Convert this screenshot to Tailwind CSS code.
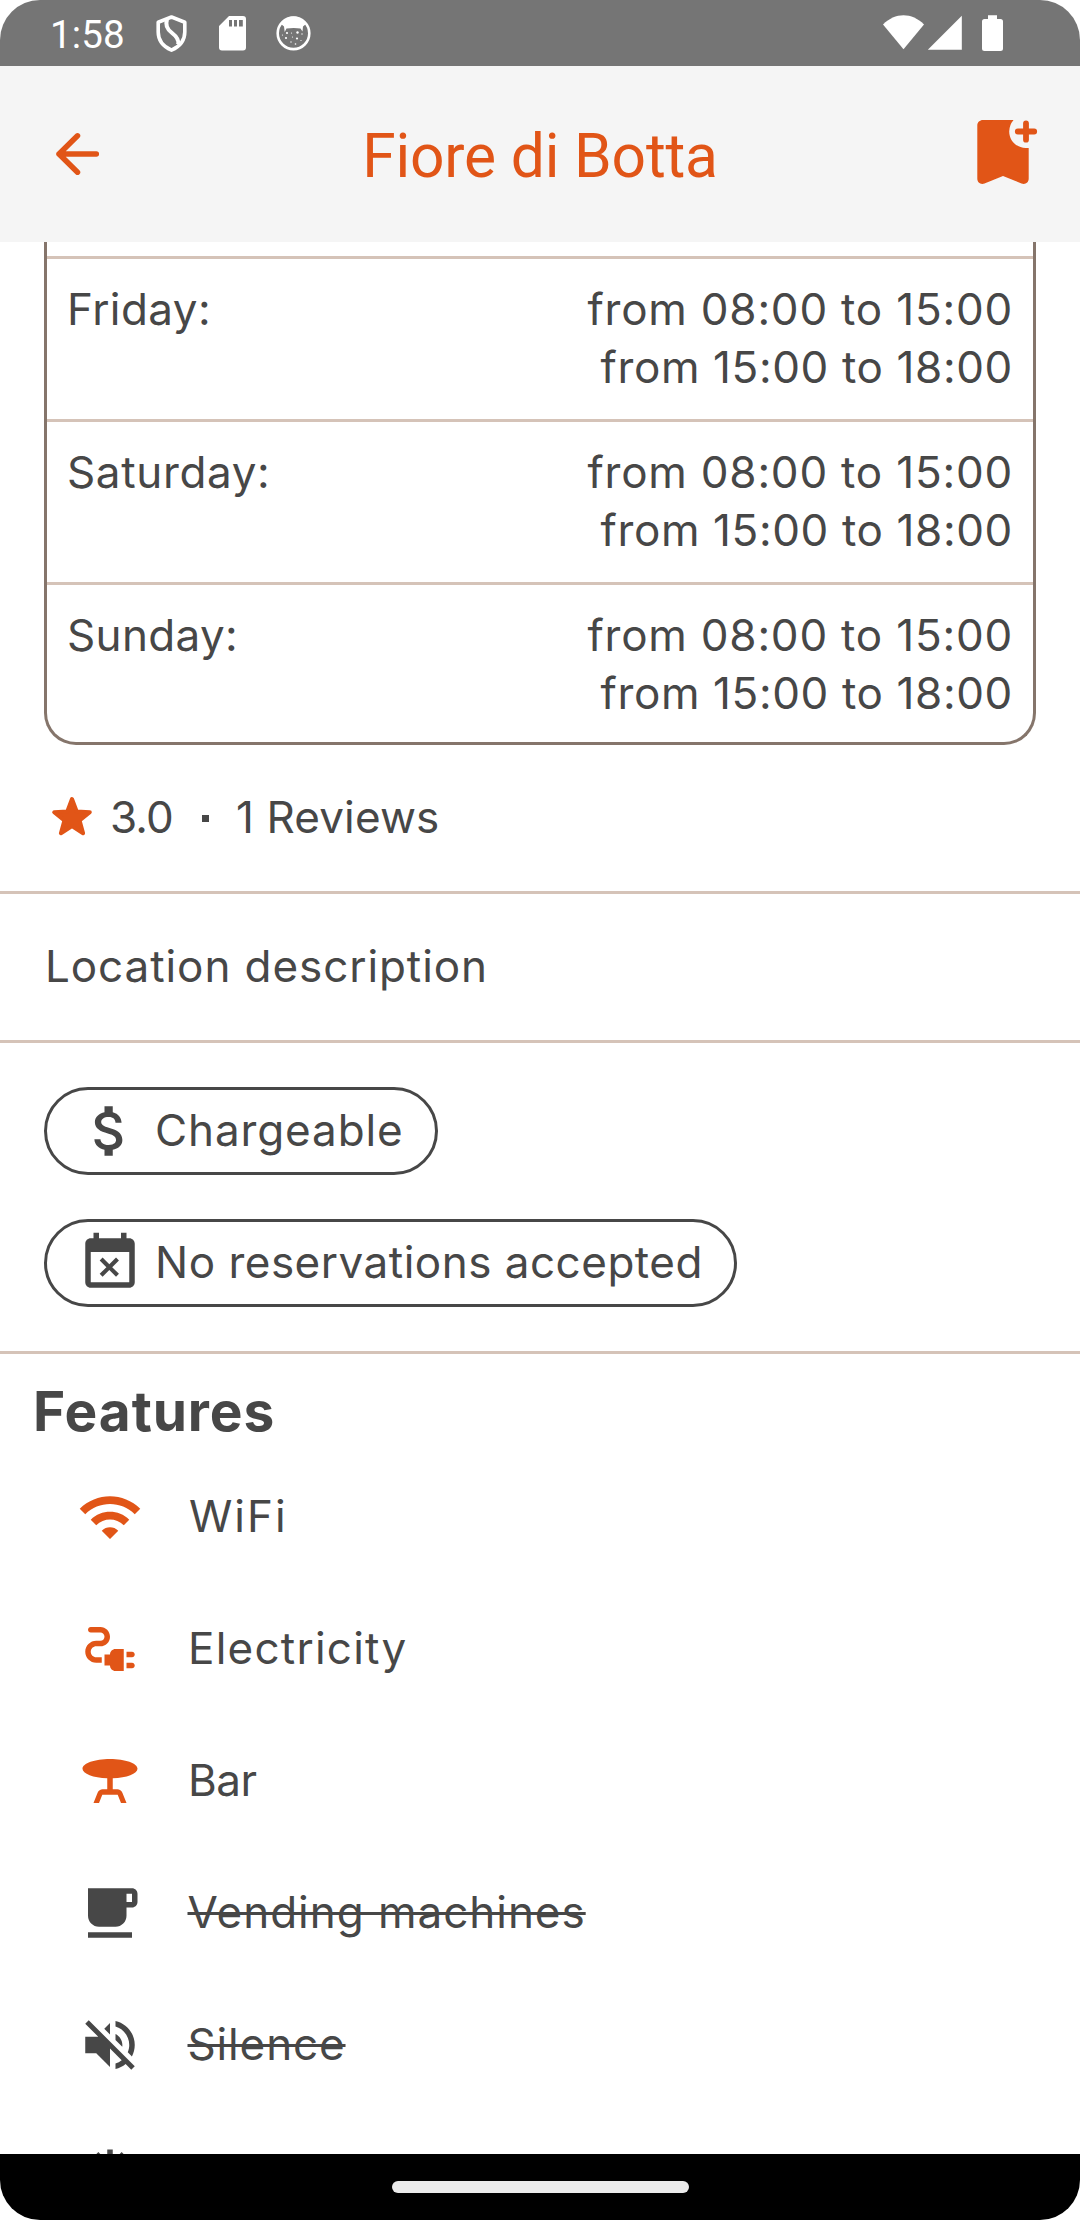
<!DOCTYPE html>
<html lang="en">
<head>
<meta charset="utf-8">
<title>Fiore di Botta</title>
<script src="https://cdn.jsdelivr.net/npm/@tailwindcss/browser@4"></script>
</head>
<body class="bg-white">
<div class="flex h-[2220px] w-[1080px] flex-col overflow-hidden rounded-[40px] bg-white font-[Inter,sans-serif] text-[44px] leading-[58px] text-[#474747]">

  <!-- Status bar -->
  <div class="flex h-[66px] shrink-0 items-center bg-[#757575] pl-[50px] font-[Roboto,sans-serif] text-[38.5px] leading-[66px] tracking-[0.13px] text-white">
    <span class="w-[102px] pt-[4px]">1:58</span>
    <svg class="h-[66px] w-[40px]" viewBox="152 0 40 66" fill="none" stroke="#fff" stroke-width="3.6" stroke-linejoin="round">
      <path d="M171.500 17l13.300 5.200V32c0 8.500-5.600 14.800-13.300 18.200C163.800 46.800 158.200 40.500 158.200 32V22.200z"/>
      <path d="M167 19.500c-2 6 0 9.500 4.500 13s8 7.500 6.500 12" stroke-width="4"/>
    </svg>
    <svg class="ml-[27px] h-[66px] w-[27px]" viewBox="219 0 27 66" fill="#fff" fill-rule="evenodd">
      <path d="M229 16h14a3 3 0 0 1 3 3v28.500a3 3 0 0 1-3 3h-21a3 3 0 0 1-3-3V26zM229 20v6.500h3V20zM234 20v6.500h3V20zM239 20v6.500h3.800V20z"/>
    </svg>
    <svg class="ml-[29px] h-[66px] w-[37px]" viewBox="275 0 37 66">
      <circle cx="293.500" cy="33.300" r="15.800" fill="none" stroke="#fff" stroke-width="2.600"/>
      <path fill="#fff" d="M281 24c3-5 7-7.500 12.500-7.500S303 19 306 24l-3 2.500-.5 5-2-3c-4-.8-9.500-.8-14 0l-1.800 3.500-.7-5.500z"/>
      <g fill="#fff"><circle cx="287" cy="33" r="1.100"/><circle cx="297.500" cy="32.500" r="1.200"/><circle cx="286" cy="38" r="1.100"/><circle cx="292.500" cy="37" r=".6"/><circle cx="297" cy="38.500" r="1.100"/><circle cx="302" cy="34" r=".7"/><circle cx="291" cy="42" r=".7"/><circle cx="295.500" cy="44" r=".8"/><circle cx="301" cy="40.500" r=".6"/><circle cx="282.500" cy="35" r=".6"/><circle cx="291.500" cy="33" r=".6"/></g>
    </svg>
    <svg class="mr-[76px] ml-auto h-[66px] w-[124px]" viewBox="880 0 124 66" fill="#fff">
      <path d="M903.500 49.300L883 24.500c12-12.400 29-12.400 41 0z"/>
      <path d="M961.800 15.800v34h-34z"/>
      <path d="M988 15.300h9V19h3.500a2.500 2.500 0 0 1 2.500 2.500v27a2.500 2.500 0 0 1-2.500 2.500h-16a2.500 2.500 0 0 1-2.500-2.500v-27a2.500 2.500 0 0 1 2.500-2.500h3.500z"/>
    </svg>
  </div>

  <!-- App bar -->
  <header class="flex h-[176px] shrink-0 items-center justify-between bg-[#f5f5f5] pr-[40px] pl-[52px] text-[#e15517]">
    <svg class="h-[52px] w-[52px]" viewBox="52 128 52 52" fill="none" stroke="currentColor" stroke-width="5.500" stroke-linecap="round" stroke-linejoin="round">
      <path d="M96.300 154H59M77.500 135.800L59 154l18.500 18.200"/>
    </svg>
    <h1 class="pt-[5px] font-[Roboto,sans-serif] text-[60.5px] leading-[72px] tracking-[-0.18px]">Fiore di Botta</h1>
    <svg class="h-[68px] w-[64px]" viewBox="976 120 64 68" fill="currentColor">
      <path d="M983 120h30.500a18.500 18.500 0 0 0-4.300 11.500c0 9.300 7.500 16.500 16.500 16.500h3v30.500c0 4-3.500 6.500-7.200 5L1003 176l-18.500 7.500c-3.700 1.500-7.200-1-7.200-5v-53c0-3.200 2.500-5.500 5.700-5.500z"/>
      <path d="M1026 123.300v16.400M1017.800 131.500h16.400" fill="none" stroke="currentColor" stroke-width="5.800" stroke-linecap="round"/>
    </svg>
  </header>

  <main class="flex min-h-0 grow flex-col overflow-hidden">
    <!-- Opening hours -->
    <section class="mx-[44px] h-[503px] shrink-0 rounded-b-[32px] border-x-3 border-b-3 border-[#85756b] pt-[14px]">
      <div class="flex h-[163px] justify-between border-t-3 border-[#d5c3b8] pt-[21px] pr-[20px] pl-[20px]">
        <span class="tracking-[0.45px]">Friday:</span>
        <div class="flex flex-col items-end"><span class="tracking-[0.79px]">from 08:00 to 15:00</span><span class="tracking-[0.62px]">from 15:00 to 18:00</span></div>
      </div>
      <div class="flex h-[163px] justify-between border-t-3 border-[#d5c3b8] pt-[21px] pr-[20px] pl-[20px]">
        <span class="tracking-[0.64px]">Saturday:</span>
        <div class="flex flex-col items-end"><span class="tracking-[0.79px]">from 08:00 to 15:00</span><span class="tracking-[0.62px]">from 15:00 to 18:00</span></div>
      </div>
      <div class="flex h-[160px] justify-between border-t-3 border-[#d5c3b8] pt-[21px] pr-[20px] pl-[20px]">
        <span class="tracking-[0.34px]">Sunday:</span>
        <div class="flex flex-col items-end"><span class="tracking-[0.79px]">from 08:00 to 15:00</span><span class="tracking-[0.62px]">from 15:00 to 18:00</span></div>
      </div>
    </section>

    <!-- Rating -->
    <section class="flex h-[149px] shrink-0 items-center border-b-3 border-[#d5c3b8] pl-[50px]">
      <svg class="h-[44px] w-[44px]" viewBox="-22 -22 44 44" fill="#e15517" stroke="#e15517" stroke-width="4" stroke-linejoin="round">
        <path d="M0-19L4.700-6.500 17.800-5.800 7.600 2.500 11.100 15.200 0 8-11.100 15.200-7.600 2.500-17.800-5.800-4.700-6.500z"/>
      </svg>
      <span class="ml-[16px] w-[92px] pb-[2px] tracking-[-0.87px]">3.0</span>
      <span class="size-[7px] bg-[#474747]"></span>
      <span class="ml-[27px] pb-[2px] tracking-[0.13px]">1 Reviews</span>
    </section>

    <!-- Description -->
    <section class="flex h-[149px] shrink-0 items-center border-b-3 border-[#d5c3b8] pb-[2px] pl-[45px]">
      <p class="tracking-[0.92px]">Location description</p>
    </section>

    <!-- Payment and reservations -->
    <section class="flex h-[311px] shrink-0 flex-col items-start gap-[44px] border-b-3 border-[#d5c3b8] pt-[44px] pl-[44px]">
      <div class="flex h-[88px] w-[394px] items-center rounded-full border-3 border-[#474747] pl-[30px]">
        <svg class="size-[66px]" viewBox="0 0 24 24" fill="currentColor"><path d="M11.800 10.900c-2.270-.59-3-1.200-3-2.150 0-1.090 1.010-1.850 2.700-1.850 1.780 0 2.440.85 2.500 2.100h2.210c-.07-1.720-1.120-3.300-3.210-3.810V3h-3v2.160c-1.940.42-3.500 1.680-3.500 3.610 0 2.310 1.910 3.460 4.700 4.130 2.500.6 3 1.480 3 2.410 0 .69-.49 1.790-2.700 1.790-2.060 0-2.870-.92-2.980-2.100h-2.200c.12 2.190 1.760 3.420 3.680 3.830V21h3v-2.150c1.950-.37 3.500-1.500 3.500-3.550 0-2.840-2.430-3.810-4.700-4.400z"/></svg>
        <span class="ml-[12px] pb-[2px] tracking-[0.88px]">Chargeable</span>
      </div>
      <div class="flex h-[88px] w-[693px] items-center rounded-full border-3 border-[#474747] pl-[30px]">
        <svg class="size-[66px]" viewBox="0 0 24 24" fill="currentColor"><path d="M9.310 17l2.440-2.440L14.190 17l1.060-1.060-2.440-2.440 2.440-2.440L14.190 10l-2.440 2.440L9.310 10l-1.060 1.060 2.440 2.440-2.440 2.440L9.310 17zM19 3h-1V1h-2v2H8V1H6v2H5c-1.110 0-1.990.9-1.990 2L3 19c0 1.100.89 2 2 2h14c1.100 0 2-.9 2-2V5c0-1.100-.9-2-2-2zm0 16H5V8h14v11z"/></svg>
        <span class="ml-[12px] pb-[2px] tracking-[0.5px]">No reservations accepted</span>
      </div>
    </section>

    <!-- Features -->
    <section class="shrink-0 pt-[24px]">
      <h2 class="pl-[33px] text-[55px] leading-[66px] font-bold tracking-[0.91px]">Features</h2>
      <ul class="mt-[7px]">
        <li class="flex h-[132px] items-center pl-[77px]">
          <svg class="size-[66px]" viewBox="0 0 24 24" fill="#e15517"><path d="M1 9l2 2c4.970-4.970 13.030-4.970 18 0l2-2C16.930 2.930 7.080 2.930 1 9zm8 8l3 3 3-3c-1.650-1.660-4.340-1.660-6 0zm-4-4l2 2c2.760-2.760 7.240-2.760 10 0l2-2C15.140 9.140 8.870 9.140 5 13z"/></svg>
          <span class="ml-[46px] pb-[2px] tracking-[2px]">WiFi</span>
        </li>
        <li class="flex h-[132px] items-center pl-[77px]">
          <svg class="size-[66px]" viewBox="0 0 24 24" fill="#e15517"><path d="M21 14c0-.55-.45-1-1-1h-2v2h2c.55 0 1-.45 1-1zM20 17h-2v2h2c.55 0 1-.45 1-1s-.45-1-1-1zM12 14h-2v4h2c0 1.100.9 2 2 2h3v-8h-3c-1.100 0-2 .9-2 2zM5 13c0-1.100.9-2 2-2h1.500c1.930 0 3.500-1.570 3.500-3.500S10.430 4 8.500 4H5c-.55 0-1 .45-1 1s.45 1 1 1h3.500c.83 0 1.500.67 1.500 1.500S9.330 9 8.500 9H7c-2.210 0-4 1.790-4 4s1.790 4 4 4h2v-2H7c-1.100 0-2-.9-2-2z"/></svg>
          <span class="ml-[45px] pb-[2px] tracking-[1.23px]">Electricity</span>
        </li>
        <li class="flex h-[132px] items-center pl-[77px]">
          <svg class="size-[66px]" viewBox="0 0 24 24" fill="#e15517"><path d="M22 7.500C22 5.570 17.520 4 12 4S2 5.570 2 7.500c0 1.810 3.950 3.310 9 3.480V15H9.350c-.82 0-1.550.5-1.860 1.260L6 20h2l1.200-3h5.600l1.200 3h2l-1.500-3.740c-.3-.76-1.040-1.260-1.850-1.260H13v-4.020c5.050-.17 9-1.670 9-3.480z"/></svg>
          <span class="ml-[45px] pb-[2px] tracking-[-0.5px]">Bar</span>
        </li>
        <li class="flex h-[132px] items-center pl-[77px]">
          <svg class="size-[66px]" viewBox="0 0 24 24" fill="currentColor"><path d="M20 3H4v10c0 2.210 1.790 4 4 4h6c2.210 0 4-1.790 4-4v-3h2c1.110 0 2-.9 2-2V5c0-1.110-.89-2-2-2zm0 5h-2V5h2v3zM4 19h16v2H4z"/></svg>
          <span class="ml-[44.5px] pb-[2px] tracking-[0.97px] line-through decoration-3">Vending machines</span>
        </li>
        <li class="flex h-[132px] items-center pl-[77px]">
          <svg class="size-[66px]" viewBox="0 0 24 24" fill="currentColor"><path d="M16.500 12c0-1.770-1.020-3.290-2.500-4.030v2.210l2.450 2.450c.03-.2.050-.41.050-.63zm2.500 0c0 .94-.2 1.820-.54 2.640l1.510 1.510C20.630 14.910 21 13.500 21 12c0-4.280-2.990-7.860-7-8.770v2.060c2.890.86 5 3.540 5 6.710zM4.270 3L3 4.270 7.730 9H3v6h4l5 5v-6.730l4.250 4.250c-.67.52-1.420.93-2.250 1.180v2.060c1.380-.31 2.630-.95 3.690-1.810L19.730 21 21 19.730l-9-9L4.270 3zM12 4L9.910 6.090 12 8.180V4z"/></svg>
          <span class="ml-[44.5px] pb-[2px] tracking-[0.86px] line-through decoration-3">Silence</span>
        </li>
        <li class="flex h-[132px] items-center pl-[77px]">
          <svg class="size-[66px]" viewBox="0 0 24 24" fill="currentColor"><path d="M22 11h-4.170l3.240-3.240-1.410-1.420L15 11h-2V9l4.660-4.660-1.420-1.410L13 6.170V2h-2v4.170L7.760 2.930 6.340 4.340 11 9v2H9L4.340 6.340 2.930 7.760 6.170 11H2v2h4.170l-3.240 3.240 1.410 1.420L9 13h2v2l-4.660 4.660 1.420 1.410L11 17.830V22h2v-4.170l3.240 3.240 1.420-1.410L13 15v-2h2l4.660 4.660 1.410-1.420L17.830 13H22z"/></svg>
        </li>
      </ul>
    </section>
  </main>

  <!-- Gesture bar -->
  <div class="flex h-[66px] shrink-0 items-center justify-center bg-black">
    <div class="h-[12px] w-[297px] rounded-full bg-[#ebebeb]"></div>
  </div>
</div>
</body>
</html>
